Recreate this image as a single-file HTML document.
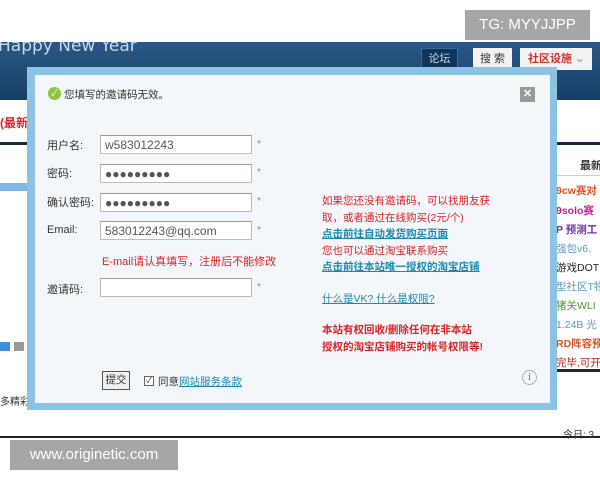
<!DOCTYPE html><html><head><meta charset="utf-8"><style>
*{margin:0;padding:0;box-sizing:border-box}
body{width:600px;height:480px;overflow:hidden;background:#fff;position:relative;font-family:"Liberation Sans","Noto Sans CJK SC",sans-serif;font-size:11px;color:#333}
.a{position:absolute;white-space:nowrap}
.lbl{position:absolute;left:47px;font-size:11px;color:#333}
.inp{position:absolute;left:100px;width:152px;height:19px;background:#fff;border:1px solid #bbb;border-top-color:#999;font-size:12px;color:#555;padding:2px 4px;line-height:14px}
.st{position:absolute;left:257px;color:#888;font-size:10px}
.r{color:#d22;font-size:10.5px}
.lk{color:#1a8ab0;text-decoration:underline;font-weight:bold;font-size:10.5px}
.li{position:absolute;left:556px;font-size:10.5px;white-space:nowrap;font-weight:bold}
</style></head><body>
<div class="a" style="left:465px;top:10px;width:125px;height:30px;background:#a6a6a6;color:#fff;font-size:15px;line-height:30px;text-align:center">TG: MYYJJPP</div>
<div class="a" style="left:0;top:42px;width:600px;height:58px;background:linear-gradient(#2a5886,#173e68);overflow:hidden">
<div class="a" style="left:-2px;top:-6px;color:#c9d8e8;font-size:17px;font-family:'DejaVu Sans',sans-serif">Happy New Year</div>
</div>
<div class="a" style="left:421px;top:48px;width:37px;height:22px;background:#123458;border:1px solid #3a6a9a;color:#cde;text-align:center;line-height:20px">论坛</div>
<div class="a" style="left:473px;top:48px;width:39px;height:22px;background:#f2f2f2;text-align:center;line-height:22px;color:#333">搜 索</div>
<div class="a" style="left:520px;top:48px;width:72px;height:22px;background:#f2f2f2;color:#c33;line-height:22px;padding-left:8px;font-weight:bold">社区设施 <span style="color:#aaa">⌄</span></div>
<div class="a r" style="left:0;top:114px;font-size:12px;font-weight:bold">(最新</div>
<div class="a" style="left:0;top:142px;width:30px;height:3px;background:#1a2a3a"></div>
<div class="a" style="left:0;top:183px;width:30px;height:8px;background:#7fb6e6"></div>
<div class="a" style="left:0;top:342px;width:10px;height:9px;background:#3a8fe0"></div>
<div class="a" style="left:14px;top:342px;width:10px;height:9px;background:#999"></div>
<div class="a" style="left:0;top:393px;font-size:10px">多精彩</div>
<div class="a" style="left:555px;top:142px;width:45px;height:3px;background:#1a2a3a"></div>
<div class="a" style="left:580px;top:157px;font-weight:bold">最新</div>
<div class="a" style="left:555px;top:175px;width:45px;height:1px;background:#ccc"></div>
<div class="li" style="top:183px;color:#e05020">9cw赛对</div>
<div class="li" style="top:203px;color:#c02090">9solo赛</div>
<div class="li" style="top:222px;color:#7030a0">P 预测工</div>
<div class="li" style="top:241px;color:#5a9ac0;font-weight:normal">强包v6.</div>
<div class="li" style="top:260px;color:#222;font-weight:normal">游戏DOT</div>
<div class="li" style="top:279px;color:#5a9ac0;font-weight:normal">型社区T物</div>
<div class="li" style="top:298px;color:#4a9a30;font-weight:normal">猪关WLI</div>
<div class="li" style="top:317px;color:#5a9ac0;font-weight:normal">1.24B 光</div>
<div class="li" style="top:336px;color:#e05020">RD阵容预</div>
<div class="li" style="top:355px;color:#c02020;font-weight:normal">完毕,可开</div>
<div class="a" style="left:555px;top:369px;width:45px;height:3px;background:#1a2a3a"></div>
<div class="a" style="left:0;top:436px;width:600px;height:2px;background:#222"></div>
<div class="a" style="left:563px;top:426px;font-size:10px">今日: 3</div>
<div class="a" style="left:10px;top:440px;width:168px;height:30px;background:#a6a6a6;color:#fff;font-size:15px;line-height:30px;text-align:center">www.originetic.com</div>
<div class="a" style="left:27px;top:67px;width:530px;height:343px;background:#8cc2e2"></div>
<div class="a" style="left:35px;top:75px;width:515px;height:328px;background:#f3f6fa"></div>
<div class="a" style="left:48px;top:87px;width:13px;height:13px;border-radius:50%;background:#8cc43c;color:#fff;font-size:9px;line-height:13px;text-align:center">✓</div>
<div class="a" style="left:64px;top:87px;font-size:10.5px">您填写的邀请码无效。</div>
<div class="a" style="left:520px;top:87px;width:15px;height:15px;background:#999;color:#fff;font-size:11px;line-height:15px;text-align:center;font-weight:bold">✕</div>
<div class="lbl" style="top:137px">用户名:</div><div class="inp" style="top:135px">w583012243</div><div class="st" style="top:139px">*</div>
<div class="lbl" style="top:165px">密码:</div><div class="inp" style="top:164px">●●●●●●●●●</div><div class="st" style="top:167px">*</div>
<div class="lbl" style="top:194px">确认密码:</div><div class="inp" style="top:193px">●●●●●●●●●</div><div class="st" style="top:196px">*</div>
<div class="lbl" style="top:224px">Email:</div><div class="inp" style="top:221px">583012243@qq.com</div><div class="st" style="top:225px">*</div>
<div class="a r" style="left:102px;top:253px;font-size:11px">E-mail请认真填写，注册后不能修改</div>
<div class="lbl" style="top:281px">邀请码:</div><div class="inp" style="top:278px"></div><div class="st" style="top:282px">*</div>
<div class="a" style="left:322px;top:193px;line-height:16.5px;width:200px">
<div class="r">如果您还没有邀请码，可以找朋友获</div>
<div class="r">取，或者通过在线购买(2元/个)</div>
<div class="lk">点击前往自动发货购买页面</div>
<div class="r">您也可以通过淘宝联系购买</div>
<div class="lk">点击前往本站唯一授权的淘宝店铺</div>
</div>
<div class="a" style="left:322px;top:291px;color:#1a8ab0;text-decoration:underline;font-size:10.5px">什么是VK? 什么是权限?</div>
<div class="a r" style="left:322px;top:322px;font-weight:bold;line-height:17px">本站有权回收/删除任何在非本站<br>授权的淘宝店铺购买的帐号权限等!</div>
<div class="a" style="left:522px;top:370px;width:15px;height:15px;border:1px solid #aaa;border-radius:50%;color:#2a7ab0;text-align:center;line-height:13px;font-size:10px;font-family:'Liberation Serif',serif">i</div>
<div class="a" style="left:102px;top:371px;width:28px;height:19px;border:1px solid #555;background:#f0f0f0;text-align:center;line-height:17px;font-size:10.5px">提交</div>
<div class="a" style="left:144px;top:376px;width:10px;height:10px;border:1px solid #666;background:#fff;font-size:8px;line-height:8px;text-align:center">✓</div>
<div class="a" style="left:158px;top:374px;font-size:10.5px">同意<span style="color:#1a8ab0;text-decoration:underline">网站服务条款</span></div>
</body></html>
